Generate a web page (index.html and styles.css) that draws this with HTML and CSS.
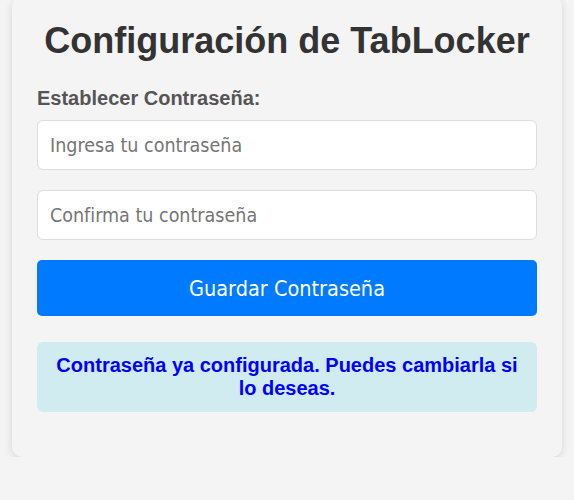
FILE: index.html
```html
<!DOCTYPE html>
<html lang="es">
<head>
<meta charset="utf-8">
<title>Configuración de TabLocker</title>
<link rel="stylesheet" href="styles.css">
</head>
<body>
<div class="card">
  <h1 class="title">Configuración de TabLocker</h1>
  <label class="label" for="pw">Establecer Contraseña:</label>
  <input class="field" id="pw" type="password" placeholder="Ingresa tu contraseña">
  <input class="field" id="pw2" type="password" placeholder="Confirma tu contraseña">
  <button class="save">Guardar Contraseña</button>
  <div class="message">Contraseña ya configurada. Puedes cambiarla si lo deseas.</div>
</div>
</body>
</html>
```
FILE: styles.css
```css
html, body {
  margin: 0;
  padding: 0;
  background: #f4f4f4;
}
body {
  font-family: "Liberation Sans", Arial, sans-serif;
}
.card {
  width: 550px;
  box-sizing: border-box;
  margin: -4px 0 0 12px;
  padding: 25px;
  background: #f4f4f4;
  border-radius: 10px;
  box-shadow: 0 2px 9px rgba(0, 0, 0, 0.13);
  display: flex;
  flex-direction: column;
}
.title {
  margin: 0 0 26px;
  font-size: 36px;
  font-weight: bold;
  color: #333;
  text-align: center;
  line-height: 40px;
}
.label {
  display: block;
  font-size: 20px;
  font-weight: bold;
  color: #555;
  line-height: 23px;
  margin-bottom: 10px;
}
.field {
  box-sizing: border-box;
  width: 500px;
  height: 50px;
  margin: 0 0 20px;
  padding: 0 12px;
  border: 1px solid #ddd;
  border-radius: 6px;
  background: #fff;
  font-family: "DejaVu Sans Condensed", "DejaVu Sans", sans-serif;
  font-stretch: condensed;
  font-size: 19.5px;
  color: #333;
}
.field::placeholder {
  color: #757575;
}
.save {
  width: 500px;
  height: 56px;
  margin: 0;
  border: none;
  border-radius: 5px;
  background: #007bff;
  color: #fff;
  font-family: "DejaVu Sans Condensed", "DejaVu Sans", sans-serif;
  font-stretch: condensed;
  font-size: 21.5px;
}
.message {
  margin-top: 26px;
  margin-bottom: 20px;
  padding: 12px 15px;
  background: #d1ecf1;
  border-radius: 6px;
  color: #0000ff;
  font-size: 20px;
  font-weight: bold;
  text-align: center;
  line-height: 23px;
}
```
